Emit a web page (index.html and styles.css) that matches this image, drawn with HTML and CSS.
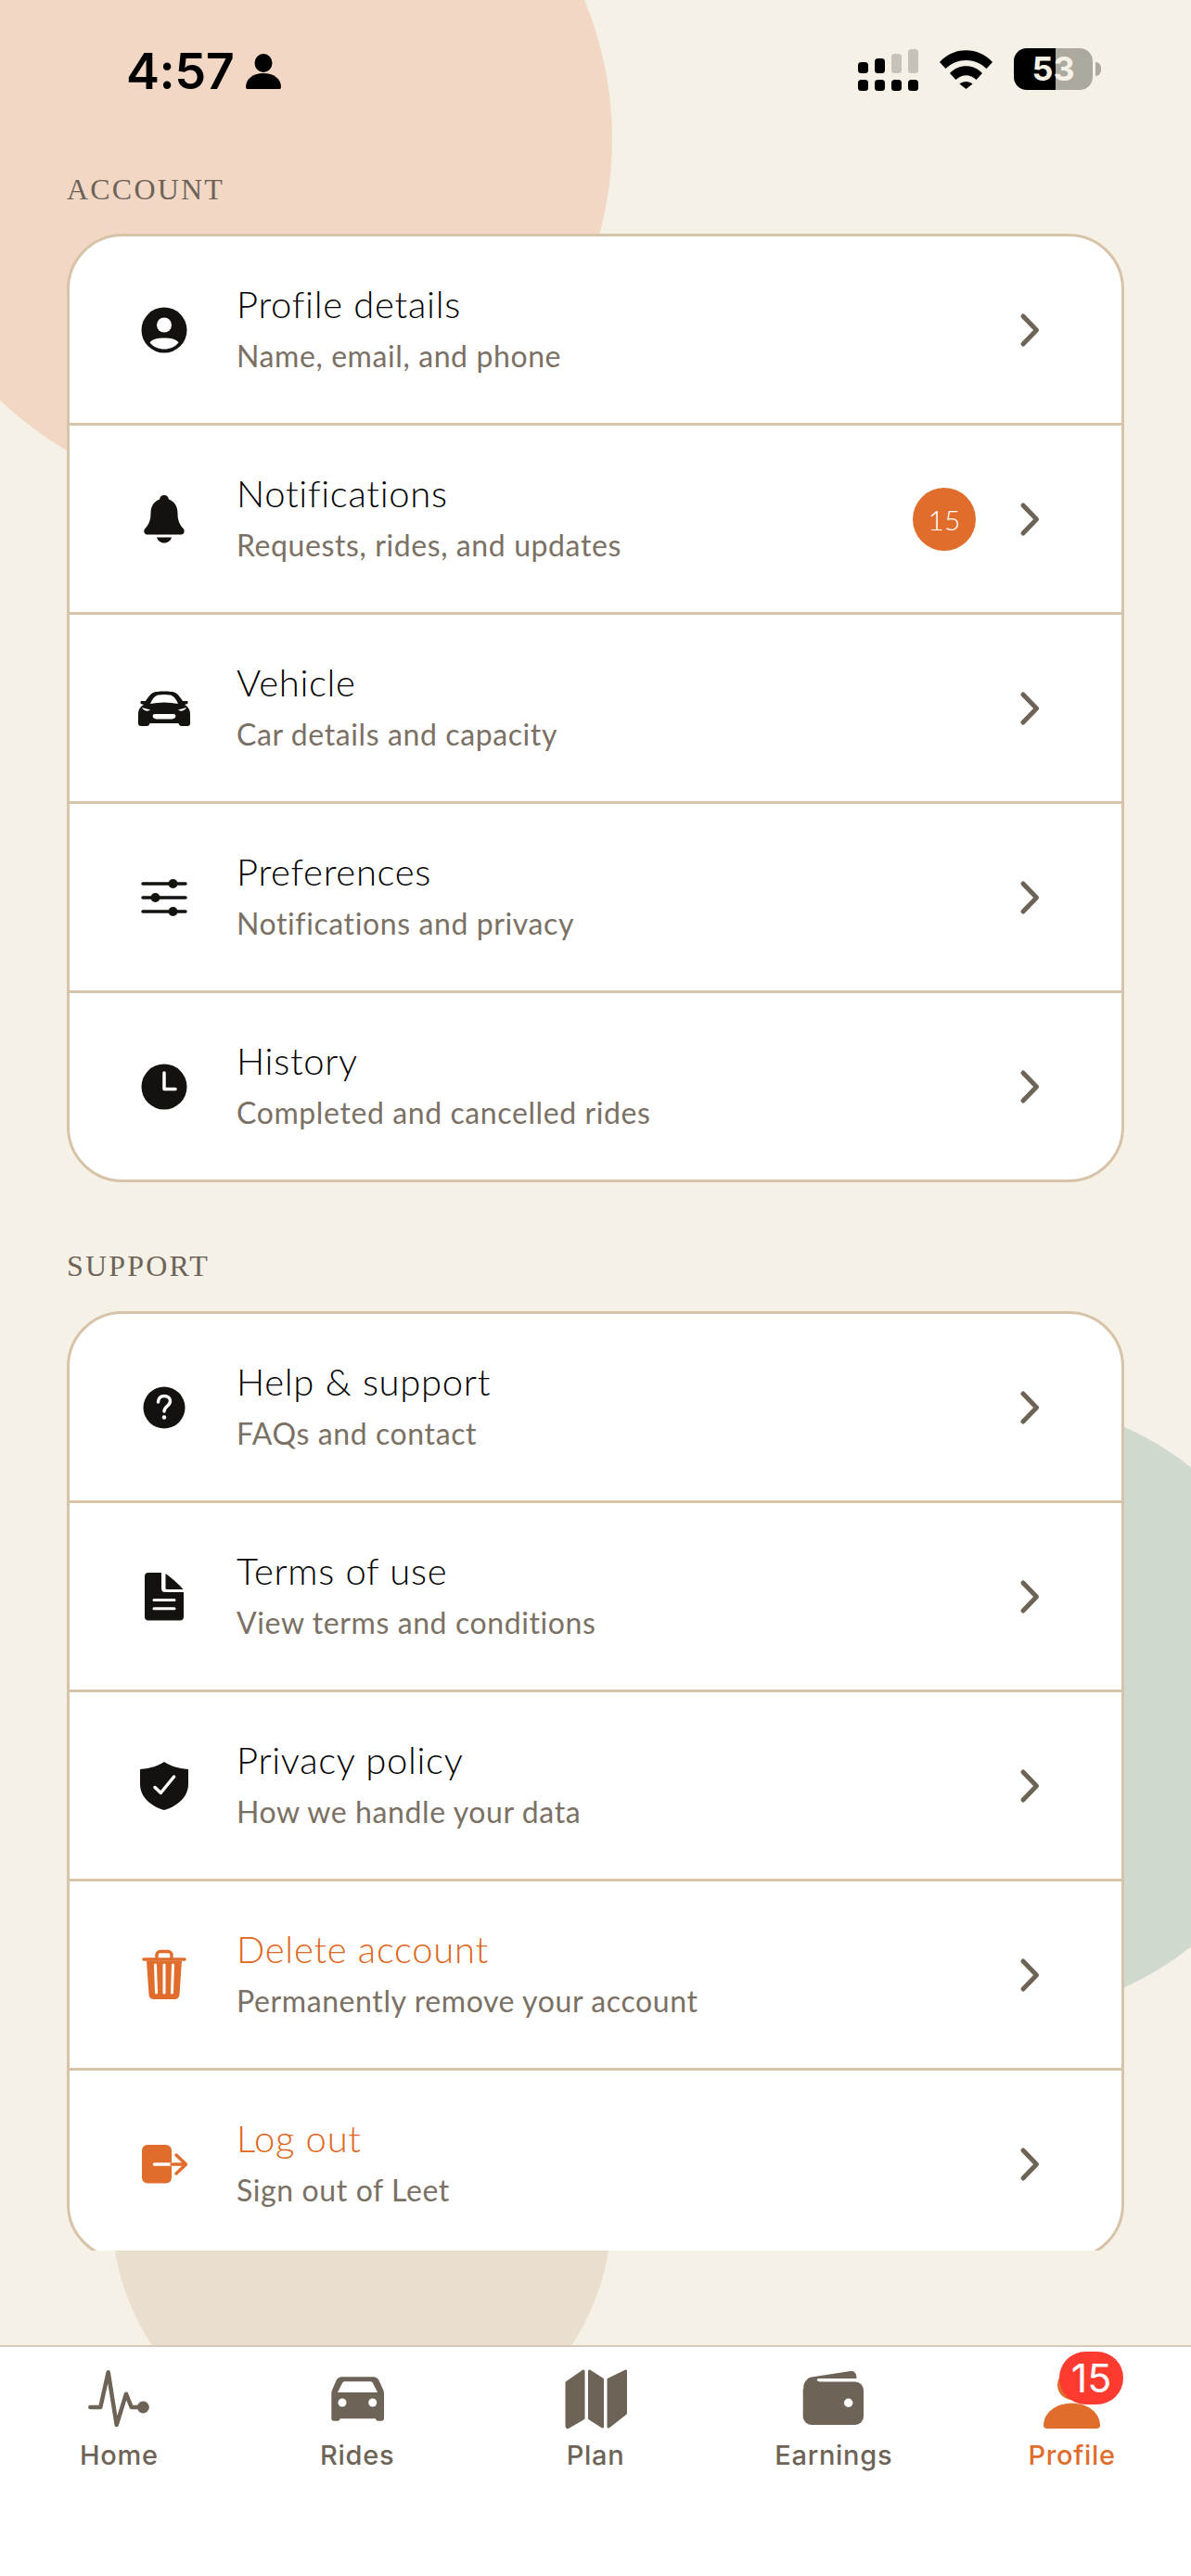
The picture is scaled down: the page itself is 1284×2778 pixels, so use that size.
FILE: index.html
```html
<!DOCTYPE html>
<html lang="en">
<head>
  <meta charset="UTF-8">
  <meta name="viewport" content="width=device-width, initial-scale=1.0">
  <title>Profile</title>
  <link rel="stylesheet" href="styles.css">
</head>
<body>
  <svg class="sprite" aria-hidden="true">
    <symbol id="chevron" viewBox="0 0 26 40">
      <path d="M7 5 L21.5 20 L7 35" fill="none" stroke="currentColor" stroke-width="5" stroke-linecap="round" stroke-linejoin="round"/>
    </symbol>
  </svg>

  <div class="screen">
    <div class="blob blob-peach"></div>
    <div class="blob blob-green"></div>
    <div class="blob blob-sand"></div>

    <div class="status-bar">
      <div class="status-left">
        <span class="clock">4:57</span>
        <svg class="status-person" viewBox="0 0 38 38">
          <ellipse cx="19" cy="10" rx="9.5" ry="10"/>
          <path d="M0 36 C0 27 8 21 19 21 C30 21 38 27 38 36 C38 37.5 37 38 36 38 H2 C1 38 0 37.5 0 36Z"/>
        </svg>
      </div>
      <div class="status-right">
        <svg class="signal" viewBox="0 0 65 45">
          <rect x="0" y="14" width="11" height="12" rx="3.5"/>
          <rect x="18" y="10" width="11" height="16" rx="3.5"/>
          <rect class="signal-off" x="36" y="5" width="11" height="21" rx="3.5"/>
          <rect class="signal-off" x="54" y="0" width="11" height="26" rx="3.5"/>
          <rect x="0" y="33" width="11" height="12" rx="3.5"/>
          <rect x="18" y="33" width="11" height="12" rx="3.5"/>
          <rect x="36" y="33" width="11" height="12" rx="3.5"/>
          <rect x="54" y="33" width="11" height="12" rx="3.5"/>
        </svg>
        <svg class="wifi" viewBox="0 0 57 42">
          <path d="M0 13 C15 -4 42 -4 57 13 L50.5 20 C38 8 19 8 6.5 20Z"/>
          <path d="M11 25 C20 14.5 37 14.5 46 25 L39.5 32 C33 25.5 24 25.5 17.5 32Z"/>
          <path d="M21.5 36.5 C25 33 32 33 35.5 36.5 L28.5 42Z"/>
        </svg>
        <div class="battery">
          <div class="battery-body">53</div>
          <div class="battery-nub"></div>
        </div>
      </div>
    </div>

    <div class="scroll">
      <div class="section-label">ACCOUNT</div>
      <div class="card">
        <div class="row">
          <svg class="row-icon" viewBox="0 0 56 56">
            <circle cx="28" cy="28" r="24.5"/>
            <circle class="cut" cx="28" cy="22.5" r="8"/>
            <path class="cut" d="M12.5 41.5 C15 37.5 21 36.5 28 36.5 C35 36.5 41 37.5 43.5 41.5 C40 46 34 48.5 28 48.5 C22 48.5 16 46 12.5 41.5Z"/>
          </svg>
          <div class="row-text">
            <div class="row-title">Profile details</div>
            <div class="row-sub">Name, email, and phone</div>
          </div>
          <svg class="chevron"><use href="#chevron"/></svg>
        </div>
        <div class="row">
          <svg class="row-icon" viewBox="0 0 56 56">
            <path d="M28 2 C31 2 32.5 4 33 6.5 C39 8.5 42.5 14 42.5 21.5 C42.5 30.5 45.5 34.5 49 38.5 C50.5 40.5 49.5 44.5 46.5 44.5 H9.5 C6.5 44.5 5.5 40.5 7 38.5 C10.5 34.5 13.5 30.5 13.5 21.5 C13.5 14 17 8.5 23 6.5 C23.5 4 25 2 28 2Z"/>
            <path d="M20 47.5 H36 C35 51 32 53.5 28 53.5 C24 53.5 21 51 20 47.5Z"/>
          </svg>
          <div class="row-text">
            <div class="row-title">Notifications</div>
            <div class="row-sub">Requests, rides, and updates</div>
          </div>
          <div class="count">15</div>
          <svg class="chevron"><use href="#chevron"/></svg>
        </div>
        <div class="row">
          <svg class="row-icon" viewBox="0 0 56 56">
            <path d="M16 11 C20 9 36 9 40 11 C43 12.5 46 17 48 20 L52 20 C54 20 54 22 53 23 L50 24 C54 26 56 30 56 34 V44 C56 46 55 47 53 47 H47 C45 47 44 46 43.5 44 H12.5 C12 46 11 47 9 47 H3 C1 47 0 46 0 44 V34 C0 30 2 26 6 24 L3 23 C2 22 2 20 4 20 H8 C10 17 13 12.5 16 11Z"/>
            <path class="cut" d="M13 23 C15 18 18 14 22 13.5 C26 12.8 30 12.8 34 13.5 C38 14 41 18 43 23 C33 21 23 21 13 23Z"/>
            <path class="cut" d="M4 27 L13 29.5 C11 31.5 6 31 4 27Z"/>
            <path class="cut" d="M52 27 L43 29.5 C45 31.5 50 31 52 27Z"/>
            <path class="cut" d="M18 34 H38 C40 34 41 36 40 37.5 C39 39 37 39.5 35 39.5 H21 C19 39.5 17 39 16 37.5 C15 36 16 34 18 34Z"/>
          </svg>
          <div class="row-text">
            <div class="row-title">Vehicle</div>
            <div class="row-sub">Car details and capacity</div>
          </div>
          <svg class="chevron"><use href="#chevron"/></svg>
        </div>
        <div class="row">
          <svg class="row-icon" viewBox="0 0 56 56">
            <path class="line" d="M5 13 H51 M5 28 H51 M5 43 H51"/>
            <circle cx="37.5" cy="13" r="5"/>
            <circle cx="18.5" cy="28" r="5"/>
            <circle cx="37.5" cy="43" r="5"/>
          </svg>
          <div class="row-text">
            <div class="row-title">Preferences</div>
            <div class="row-sub">Notifications and privacy</div>
          </div>
          <svg class="chevron"><use href="#chevron"/></svg>
        </div>
        <div class="row">
          <svg class="row-icon" viewBox="0 0 56 56">
            <circle cx="28" cy="28" r="24.5"/>
            <path class="cut-line" d="M28 13 V30.5 H40"/>
          </svg>
          <div class="row-text">
            <div class="row-title">History</div>
            <div class="row-sub">Completed and cancelled rides</div>
          </div>
          <svg class="chevron"><use href="#chevron"/></svg>
        </div>
      </div>

      <div class="section-label section-gap">SUPPORT</div>
      <div class="card">
        <div class="row">
          <svg class="row-icon" viewBox="0 0 56 56">
            <circle cx="28" cy="28" r="22.5"/>
            <path class="cut-line" d="M21.5 22 C21.5 17.5 24.5 15.5 28 15.5 C32 15.5 34.5 18 34.5 21 C34.5 26 28 26.5 28 32"/>
            <circle class="cut" cx="28" cy="38.5" r="2.3"/>
          </svg>
          <div class="row-text">
            <div class="row-title">Help &amp; support</div>
            <div class="row-sub">FAQs and contact</div>
          </div>
          <svg class="chevron"><use href="#chevron"/></svg>
        </div>
        <div class="row">
          <svg class="row-icon" viewBox="0 0 56 56">
            <path d="M11 2 H25 V19 A4 4 0 0 0 29 23 H49 V49.5 A4 4 0 0 1 45 53.5 H11 A4 4 0 0 1 7 49.5 V6 A4 4 0 0 1 11 2Z"/>
            <path d="M29.5 3 C40 11 44 15 48.5 20 H31 A1.5 1.5 0 0 1 29.5 18.5Z"/>
            <path class="cut-line cut-thin" d="M17 31.5 H39 M17 40.8 H39"/>
          </svg>
          <div class="row-text">
            <div class="row-title">Terms of use</div>
            <div class="row-sub">View terms and conditions</div>
          </div>
          <svg class="chevron"><use href="#chevron"/></svg>
        </div>
        <div class="row">
          <svg class="row-icon" viewBox="0 0 56 56">
            <path d="M28 2 C34 6 42 9 54 10 V26 C54 40 42 50 28 54 C14 50 2 40 2 26 V10 C14 9 22 6 28 2Z"/>
            <path class="cut-line" d="M18 29.5 L24.3 35.5 L38.6 18"/>
          </svg>
          <div class="row-text">
            <div class="row-title">Privacy policy</div>
            <div class="row-sub">How we handle your data</div>
          </div>
          <svg class="chevron"><use href="#chevron"/></svg>
        </div>
        <div class="row row-danger">
          <svg class="row-icon" viewBox="0 0 56 56">
            <path class="line" d="M6 11 H50"/>
            <path class="line" d="M20 9 V6 C20 4 22 2.5 24 2.5 H32 C34 2.5 36 4 36 6 V9"/>
            <path d="M9 12.5 H47 L44.5 49 C44.3 52 42 54 39 54 H17 C14 54 11.7 52 11.5 49Z"/>
            <path class="cut-line cut-thin" d="M18.5 17 L19.5 47 M28 17 V47 M37.5 17 L36.5 47"/>
          </svg>
          <div class="row-text">
            <div class="row-title">Delete account</div>
            <div class="row-sub">Permanently remove your account</div>
          </div>
          <svg class="chevron"><use href="#chevron"/></svg>
        </div>
        <div class="row row-danger">
          <svg class="row-icon" viewBox="0 0 56 56">
            <rect x="4" y="7" width="32" height="41.5" rx="6"/>
            <path class="cut-line" d="M17.5 28 H36"/>
            <path class="line" d="M36 28 H51 M41 18 L51.5 28 L41 38"/>
          </svg>
          <div class="row-text">
            <div class="row-title">Log out</div>
            <div class="row-sub">Sign out of Leet</div>
          </div>
          <svg class="chevron"><use href="#chevron"/></svg>
        </div>
      </div>
    </div>

    <div class="tab-bar">
      <div class="tab">
        <svg class="tab-icon" viewBox="0 0 72 66">
          <path class="pulse" d="M5.3 42 H16.3 L24.7 4.3 L33.7 61 L44 27.7 L49.7 42 H56"/>
          <circle cx="62.3" cy="42" r="6.5"/>
        </svg>
        <span>Home</span>
      </div>
      <div class="tab">
        <svg class="tab-icon" viewBox="0 0 72 66">
          <path d="M19.5 9.3 H53.5 C56 9.3 58 10.5 59.5 13 L64 23 C64.7 24.5 65 25.5 65 27.5 V54 C65 55.7 64 56.7 62.5 56.7 H58.5 C57 56.7 56 55.7 56 54.3 H17.5 C17.5 55.7 16.5 56.7 15 56.7 H10.8 C9.3 56.7 8.3 55.7 8.3 54 V27.5 C8.3 25.5 8.6 24.5 9.3 23 L13.5 13 C15 10.5 17 9.3 19.5 9.3Z"/>
          <path class="cut" d="M15 26 L20 16 C20.7 14.8 21.5 14.3 23 14.3 H50 C51.5 14.3 52.3 14.8 53 16 L58 26Z"/>
          <circle class="cut" cx="20" cy="37" r="4.5"/>
          <circle class="cut" cx="52.7" cy="37" r="4.5"/>
        </svg>
        <span>Rides</span>
      </div>
      <div class="tab">
        <svg class="tab-icon" viewBox="0 0 72 66">
          <path class="panel" d="M5 15.5 L23 3 V54 L6.5 63.5 C5.5 64 5 63 5 62Z"/>
          <path class="panel" d="M29.5 3 L43.5 12 V63 L29.5 54Z"/>
          <path class="panel" d="M50 12 L68.5 3 V48.5 L50 63Z"/>
        </svg>
        <span>Plan</span>
      </div>
      <div class="tab">
        <svg class="tab-icon" viewBox="0 0 72 66">
          <path d="M3 21 C4 13.5 8 10 12 9.5 L54 3 C59 2.5 60.5 6 60.5 12 H20 V20 H3Z"/>
          <rect x="2.7" y="14.5" width="65.3" height="46.5" rx="9"/>
          <path class="cut-line cut-thin" d="M19.3 12.5 H61"/>
          <circle class="cut" cx="51.7" cy="37.3" r="4.7"/>
        </svg>
        <span>Earnings</span>
      </div>
      <div class="tab tab-active">
        <svg class="tab-icon" viewBox="0 0 72 66">
          <circle cx="36" cy="18" r="16"/>
          <path d="M5 62 C5 48 18 37.7 35.5 37.7 C53 37.7 66 48 66 62 C66 64 64 65 62 65 H9 C7 65 5 64 5 62Z"/>
        </svg>
        <span>Profile</span>
        <div class="tab-badge">15</div>
      </div>
    </div>
  </div>
</body>
</html>
```

FILE: styles.css
```css
* {
  box-sizing: border-box;
}
body {
  margin: 0;
  font-family: "Lato", "Noto Sans", sans-serif;
}
.sprite {
  display: none;
}
.screen {
  position: relative;
  display: flex;
  flex-direction: column;
  width: 1284px;
  height: 2778px;
  overflow: hidden;
  background-color: #f5f1e6;
}

/* background circles */
.blob {
  position: absolute;
  border-radius: 50%;
}
.blob-peach {
  left: -120px;
  top: -240px;
  width: 780px;
  height: 780px;
  background-color: #f2d7c5;
}
.blob-green {
  left: 746px;
  top: 1510px;
  width: 662px;
  height: 662px;
  background-color: #d0d9ce;
}
.blob-sand {
  left: 120px;
  top: 2112px;
  width: 540px;
  height: 540px;
  background-color: #eadfcf;
}

/* status bar */
.status-bar {
  position: relative;
  display: flex;
  justify-content: space-between;
  height: 184px;
  padding: 52px 97px 0 136px;
}
.status-left {
  display: flex;
  align-items: flex-start;
  gap: 13px;
}
.clock {
  font-family: "Inter", sans-serif;
  font-size: 54px;
  font-weight: 600;
  line-height: 50px;
  letter-spacing: -0.5px;
  color: #000;
}
.status-person {
  width: 38px;
  height: 38px;
  margin-top: 6px;
}
.status-right {
  display: flex;
  align-items: flex-start;
  gap: 23px;
}
.signal {
  width: 65px;
  height: 45px;
  margin-top: 1px;
}
.signal-off {
  fill: #c6c2ba;
}
.wifi {
  width: 57px;
  height: 42px;
  margin-top: 2px;
}
.battery {
  display: flex;
  align-items: center;
  gap: 3px;
}
.battery-body {
  width: 85px;
  height: 45px;
  border-radius: 14px;
  background: linear-gradient(90deg, #000 53%, #aca99f 53%);
  font-family: "Inter", sans-serif;
  font-size: 36px;
  font-weight: 700;
  line-height: 45px;
  text-align: center;
  color: #f5f1e6;
}
.battery-nub {
  width: 6px;
  height: 15px;
  border-radius: 0 8px 8px 0;
  background-color: #aca99f;
}

/* list */
.scroll {
  position: relative;
  height: 2243px;
  padding: 0 72px;
  overflow: hidden;
}
.section-label {
  height: 40px;
  margin-bottom: 28px;
  font-family: "Liberation Serif", serif;
  font-size: 32px;
  line-height: 40px;
  letter-spacing: 2.2px;
  color: #6e6357;
}
.section-gap {
  margin-top: 70px;
  margin-bottom: 29px;
}
.card {
  border: 3px solid #d6c3a8;
  border-radius: 60px;
  background-color: #fff;
  overflow: hidden;
}
.row {
  display: flex;
  align-items: center;
  height: 204px;
  padding: 0 87px 0 74px;
  border-top: 3px solid #d6c3a8;
}
.row:first-child {
  height: 201px;
  border-top: none;
}
.row-icon {
  flex-shrink: 0;
  width: 56px;
  height: 56px;
  margin-right: 50px;
  fill: #14120f;
  color: #14120f;
}
.cut {
  fill: #fff;
}
.line {
  fill: none;
  stroke: currentColor;
  stroke-width: 3.5;
  stroke-linecap: round;
  stroke-linejoin: round;
}
.cut-line {
  fill: none;
  stroke: #fff;
  stroke-width: 3.5;
  stroke-linecap: round;
  stroke-linejoin: round;
}
.cut-thin {
  stroke-width: 3;
}
.row-text {
  flex: 1;
  padding-bottom: 4px;
}
.row-title {
  font-size: 40px;
  font-weight: 300;
  line-height: 50px;
  letter-spacing: 0.7px;
  color: #000;
}
.row-sub {
  margin-top: 10px;
  font-size: 32px;
  font-weight: 400;
  line-height: 42px;
  letter-spacing: 0.6px;
  color: #7a7064;
}
.row-danger .row-title {
  color: #dd6620;
}
.row-danger .row-icon {
  fill: #e06d2c;
  color: #e06d2c;
}
.count {
  width: 68px;
  height: 68px;
  margin-right: 44px;
  border-radius: 50%;
  background-color: #e06d2c;
  font-size: 30px;
  font-weight: 300;
  line-height: 68px;
  text-align: center;
  color: #fff;
}
.chevron {
  flex-shrink: 0;
  width: 26px;
  height: 40px;
  color: #6e6357;
}

/* tab bar */
.tab-bar {
  position: relative;
  display: flex;
  margin-top: auto;
  height: 249px;
  padding-top: 23px;
  border-top: 2px solid #d6c9b6;
  background-color: #fff;
}
.tab {
  position: relative;
  display: flex;
  flex: 1;
  flex-direction: column;
  align-items: center;
  gap: 10px;
  font-family: "Inter", sans-serif;
  font-size: 29px;
  font-weight: 450;
  line-height: 36px;
  letter-spacing: 0.7px;
  color: #6e6357;
}
.tab-icon {
  width: 72px;
  height: 66px;
  fill: currentColor;
}
.pulse {
  fill: none;
  stroke: currentColor;
  stroke-width: 4.5;
  stroke-linecap: round;
  stroke-linejoin: round;
}
.panel {
  stroke: currentColor;
  stroke-width: 3;
  stroke-linejoin: round;
}
.tab-active {
  color: #e06d2c;
}
.tab-badge {
  position: absolute;
  left: 115px;
  top: -18px;
  width: 69px;
  height: 57px;
  border-radius: 29px;
  background-color: #ff3b30;
  font-size: 43px;
  font-weight: 400;
  line-height: 57px;
  letter-spacing: 0;
  text-align: center;
  color: #fff;
}
```
